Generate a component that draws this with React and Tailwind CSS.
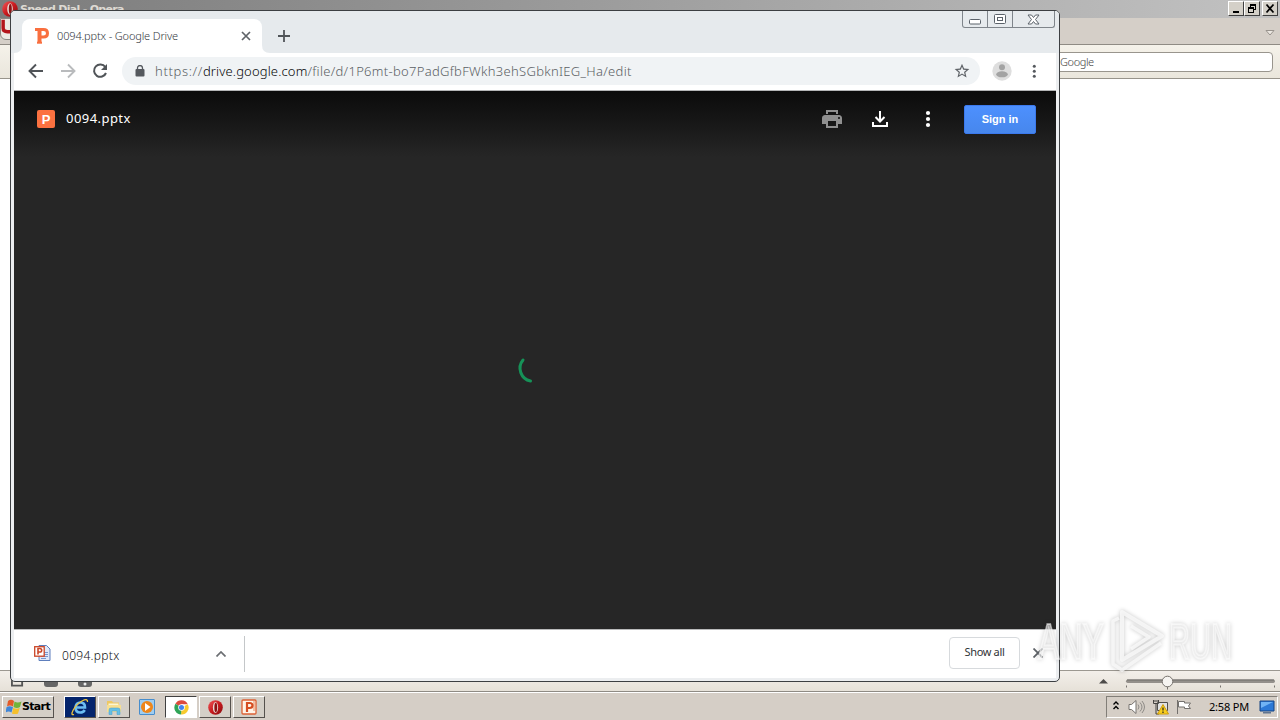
import React from "react";

const UI = "font-['Noto_Sans',sans-serif]";

function OperaLogo({ className }) {
  return (
    <svg viewBox="0 0 16 16" className={className}>
      <defs>
        <linearGradient id="op" x1="0" y1="0" x2="1" y2="1">
          <stop offset="0" stopColor="#f0595b" />
          <stop offset="0.5" stopColor="#c91a1e" />
          <stop offset="1" stopColor="#860b0e" />
        </linearGradient>
      </defs>
      <ellipse cx="8" cy="8" rx="7.8" ry="7.8" fill="url(#op)" />
      <ellipse cx="8" cy="8" rx="2.8" ry="5.8" fill="#e9dcd6" />
      <ellipse cx="8.3" cy="8" rx="1.5" ry="5" fill="#8d1113" />
    </svg>
  );
}

function ClassicButton({ children, className = "" }) {
  return (
    <div className={`flex h-[15px] w-4 items-center justify-center border border-t-white border-l-white border-r-[#404040] border-b-[#404040] bg-[#d4d0c8] ${className}`}>
      <svg viewBox="0 0 12 11" className="h-[11px] w-3" fill="none" stroke="#000" shapeRendering="crispEdges">{children}</svg>
    </div>
  );
}

function OperaWindow() {
  return (
    <div className="flex h-[692px] flex-col bg-white">
      <div className="flex h-[18px] shrink-0 items-start bg-linear-to-r from-[#7c7c7c] to-[#c2c2c2] pr-[2px]">
        <OperaLogo className="mt-px ml-[2px] h-4 w-4" />
        <span className="ml-[2px] font-['DejaVu_Sans',sans-serif] text-[11px] leading-[19px] font-bold tracking-[-0.7px] whitespace-nowrap text-[#dedad3]">Speed Dial - Opera</span>
        <div className="mt-px ml-auto flex">
          <ClassicButton><path d="M3 8.500h6" strokeWidth="2" /></ClassicButton>
          <ClassicButton className="mr-[2px]">
            <path d="M4.500 4V1.500h5v5H8M4 2h6M2.500 4.500h5v5h-5zM2 5h6" strokeWidth="1.200" />
          </ClassicButton>
          <ClassicButton><path d="M2.500 1.500l7 8M9.500 1.500l-7 8" strokeWidth="1.800" shapeRendering="auto" /></ClassicButton>
        </div>
      </div>
      <div className="flex h-[27px] shrink-0 items-center justify-between border-b border-[#8f8b84] bg-[#d5cfc8] pr-[5px]">
        <div className="flex h-[22px] w-[14px] items-start self-start rounded-bl-md border border-[#8b8782] bg-[#ece9e4]">
          <svg viewBox="0 0 14 18" className="h-[17px] w-[14px]" fill="none"><path d="M2.500 0v10q0 4 5 4h4" stroke="#b3141b" strokeWidth="4" /></svg>
        </div>
        <svg viewBox="0 0 10 8" className="mt-1 h-2 w-[10px]"><path d="M1 1.500h8L5 6z" fill="#ece8e2" stroke="#99948e" /></svg>
      </div>
      <div className="flex h-[34px] shrink-0 items-center justify-end border-b border-[#98948b] bg-linear-to-b from-[#f5f2ea] to-[#eae6dc] pr-[7px]">
        <div className={`flex h-5 w-[240px] items-center rounded-[4px] border border-[#99958d] bg-white pt-px pl-[26px] ${UI} text-[11px] font-light tracking-[-0.4px] text-[#444]`}>Google</div>
      </div>
      <div className="flex-1" />
      <div className="flex h-[21px] shrink-0 items-center border-t border-[#9c9891] bg-linear-to-b from-[#f3efea] to-[#e6e1d8] pr-[5px]">
        <div className="-mt-[3px] ml-[11px] flex items-end gap-[20px]">
          <svg viewBox="0 0 14 14" className="h-[14px] w-[13px]" fill="none" stroke="#555" strokeWidth="2"><path d="M1 1h11v12H1z" /></svg>
          <svg viewBox="0 0 14 14" className="h-[14px] w-[14px]"><rect y="3" width="14" height="11" rx="3" fill="#666" /></svg>
          <svg viewBox="0 0 14 14" className="h-[14px] w-[14px]"><rect width="14" height="14" rx="3" fill="#666" /><circle cx="7" cy="11" r="1.500" fill="#eee" /></svg>
        </div>
        <svg viewBox="0 0 180 18" className="ml-auto h-[18px] w-[180px]">
          <path d="M4 11.500L8.500 7l4.500 4.500z" fill="#4d4b49" />
          <rect x="31" y="7.500" width="149" height="3.500" rx="1.700" fill="#94908b" />
          <path d="M32 8h147" stroke="#716e6b" />
          <path d="M31.500 13.500v2M72.500 13.500v4M125.500 13.500v2M179.500 13.500v2" stroke="#77736e" />
          <circle cx="72.500" cy="9.500" r="5.300" fill="#f6f4f1" stroke="#77736e" />
        </svg>
      </div>
      <div className="h-px shrink-0 bg-[#8f8b84]" />
    </div>
  );
}

function TabStrip() {
  return (
    <div className="flex h-[42px] shrink-0 items-start bg-[#e6eaed]">
      <div className="mt-2 flex h-[34px]">
        <svg viewBox="0 0 8 34" className="h-[34px] w-2"><path d="M8 26v8H0q8 0 8-8" fill="#fff" /></svg>
        <div className="flex w-[240px] items-center rounded-t-lg bg-white pr-[11px] pl-[13px]">
          <svg viewBox="0 0 14 16" className="h-4 w-[14px]" fill="none" stroke="#f96f3f" strokeWidth="3"><path d="M0 1.500h8.500q4 0 4 3.700t-4 3.800H5" /><path d="M4.500 1v14" strokeWidth="4" /><path d="M2 14.700h5" strokeWidth="2" /></svg>
          <span className={`ml-[8px] ${UI} text-[11px] font-light tracking-[-0.15px] whitespace-nowrap text-[#33373c]`}>0094.pptx - Google Drive</span>
          <svg viewBox="0 0 10 10" className="ml-auto h-[10px] w-[10px]" stroke="#5f6368" strokeWidth="1.700"><path d="M1 1l8 8M9 1l-8 8" /></svg>
        </div>
        <svg viewBox="0 0 8 34" className="h-[34px] w-2"><path d="M0 26v8h8q-8 0-8-8" fill="#fff" /></svg>
      </div>
      <svg viewBox="0 0 12 12" className="mt-[19px] ml-[8px] h-3 w-3" stroke="#505458" strokeWidth="1.800"><path d="M6 0v12M0 6h12" /></svg>
      <div className="mr-px ml-auto flex h-[17px] w-[93px] rounded-b-[3px] border border-t-0 border-[#7f858b] text-[#5b626a]">
        <div className="flex w-[25px] items-center justify-center border-r border-[#7f858b]">
          <svg viewBox="0 0 12 6" className="mt-[5px] h-[6px] w-3"><rect x="0.500" y="0.500" width="11" height="4.500" rx="1" fill="#fff" stroke="currentColor" /></svg>
        </div>
        <div className="flex w-[25px] items-center justify-center border-r border-[#7f858b]">
          <svg viewBox="0 0 12 10" className="h-[10px] w-3" fill="#fff" stroke="currentColor"><rect x="0.500" y="0.500" width="11" height="9" rx="1" /><rect x="3.500" y="3.500" width="5" height="3" /></svg>
        </div>
        <div className="flex flex-1 items-center justify-center">
          <svg viewBox="0 0 13 11" className="h-[11px] w-[13px]" fill="#fff" stroke="currentColor"><path d="M1 1h3.500l2 2.500 2-2.500H12L8.500 5.500 12 10H8.500l-2-2.500-2 2.500H1l3.500-4.500z" /></svg>
        </div>
      </div>
    </div>
  );
}

function Toolbar() {
  return (
    <div className="flex h-[38px] shrink-0 items-center border-b border-[#b4b5b6] bg-white pl-[14px]">
      <svg viewBox="0 0 16 16" className="-mt-[2px] h-4 w-4" fill="none" stroke="#505458" strokeWidth="1.900"><path d="M15 8H2M8 1.500L1.500 8 8 14.500" /></svg>
      <svg viewBox="0 0 16 16" className="-mt-[2px] ml-4 h-4 w-4" fill="none" stroke="#b9bbbd" strokeWidth="1.900"><path d="M1 8h13M8 1.500L14.500 8 8 14.500" /></svg>
      <svg viewBox="0 0 16 16" className="-mt-[2px] ml-4 h-4 w-4" fill="none" stroke="#505458" strokeWidth="2"><path d="M13.300 4A6.200 6.200 0 1 0 14 10" /><path d="M15 1v6H9z" fill="#505458" stroke="none" /></svg>
      <div className="-mt-[2px] ml-[14px] flex h-7 w-[858px] items-center rounded-full bg-[#f0f3f5] pr-[10px] pl-[13px]">
        <svg viewBox="0 0 10 12" className="h-3 w-[10px]"><rect x="0.500" y="4" width="9" height="7.500" rx="1" fill="#55595e" /><path d="M2.500 4.500V3a2.500 2.500 0 0 1 5 0v1.500" fill="none" stroke="#55595e" strokeWidth="1.300" /></svg>
        <div className={`ml-[10px] ${UI} text-[13px] leading-5 font-light whitespace-nowrap text-[#5b5f64]`}>
          <span className="tracking-[0.65px]">https://</span><span className="tracking-[0.15px] text-[#050607]">drive.google.com</span><span className="tracking-[0.3px]">/file/d/1P6mt-bo7PadGfbFWkh3ehSGbknIEG_Ha/edit</span>
        </div>
        <svg viewBox="0 0 24 24" className="ml-auto h-4 w-4 scale-110" fill="#5f6368"><path d="M22 9.240l-7.190-.620L12 2 9.190 8.630 2 9.240l5.460 4.730L5.820 21 12 17.270 18.180 21l-1.630-7.030L22 9.240zM12 15.400l-3.760 2.270 1-4.280-3.320-2.880 4.380-.380L12 6.100l1.710 4.040 4.380.380-3.320 2.880 1 4.280L12 15.400z" /></svg>
      </div>
      <svg viewBox="0 0 20 20" className="-mt-[2px] ml-[12px] h-5 w-5"><circle cx="10" cy="10" r="9.700" fill="#dedede" /><circle cx="10" cy="6.300" r="3" fill="#a3a3a3" /><ellipse cx="10" cy="13.300" rx="5.800" ry="3" fill="#a3a3a3" /></svg>
      <svg viewBox="0 0 4 14" className="-mt-px ml-[20px] h-[14px] w-1" fill="#55595e"><circle cx="2.300" cy="2.200" r="1.500" /><circle cx="2.300" cy="7.200" r="1.500" /><circle cx="2.300" cy="12.200" r="1.500" /></svg>
    </div>
  );
}

function Viewer() {
  return (
    <div className="flex min-h-0 flex-1 flex-col bg-[#262626]">
      <div className="flex h-[66px] shrink-0 items-start bg-linear-to-b from-[#0b0b0b] to-[#262626] pr-5 pl-[23px]">
        <div className="mt-[19px] flex h-[18px] w-[18px] items-center justify-center rounded-[2px] bg-[#fb7140] font-['Liberation_Sans',sans-serif] text-[13px] leading-none font-bold text-white">P</div>
        <span className={`mt-[17px] ml-[11px] ${UI} text-[13px] leading-5 tracking-[0.45px] text-white`}>0094.pptx</span>
        <svg viewBox="0 0 24 24" className="mt-4 ml-auto h-6 w-6" fill="#909090"><path d="M19 8H5c-1.660 0-3 1.340-3 3v6h4v4h12v-4h4v-6c0-1.660-1.340-3-3-3zm-3 11H8v-5h8v5zm3-7c-.550 0-1-.450-1-1s.450-1 1-1 1 .450 1 1-.450 1-1 1zm-1-9H6v4h12V3z" /><path d="M8 5h8v3H8z" fill="#151515" /></svg>
        <svg viewBox="0 0 24 24" className="mt-4 ml-6 h-6 w-6" fill="none" stroke="#fff" strokeWidth="2"><path d="M5 15v4h14v-4M12 4v10M7.500 10l4.500 4.500 4.500-4.500" /></svg>
        <svg viewBox="0 0 24 24" className="mt-4 ml-6 h-6 w-6" fill="#fff"><circle cx="12" cy="6" r="2.100" /><circle cx="12" cy="12" r="2.100" /><circle cx="12" cy="18" r="2.100" /></svg>
        <div className="mt-[14px] ml-6 flex h-[29px] w-[72px] items-center justify-center rounded-[2px] border border-[#3b79ed] bg-linear-to-b from-[#4d90fe] to-[#4787ed] font-['Liberation_Sans',sans-serif] text-[11px] font-bold text-white">Sign in</div>
      </div>
      <div className="flex flex-1 justify-center pr-[14px]">
        <svg viewBox="0 0 30 30" className="mt-[199px] h-[30px] w-[30px]" fill="none"><path d="M9 4A13 13 0 0 0 16.500 25" transform="translate(1 0)" stroke="#169258" strokeWidth="3" strokeLinecap="round" /></svg>
      </div>
    </div>
  );
}

function DownloadShelf() {
  return (
    <div className="flex h-[49px] shrink-0 items-center border-t border-[#b9babb] bg-white pl-5">
      <svg viewBox="0 0 17 17" className="-mt-[2px] h-[17px] w-[17px]">
        <path d="M5 .500h7.500l3.500 3.500v11.500H5z" fill="#dfe8f8" stroke="#5e7fbd" />
        <path d="M7 7.500h7M7 9.500h7M7 11.500h7M7 13.500h5" stroke="#7896cf" />
        <rect x=".700" y="1.700" width="9.500" height="9.500" fill="#fff" stroke="#ca4627" strokeWidth="1.300" />
        <path d="M4 9.500v-6h1.800q1.900 0 1.900 1.800T5.800 7H4" fill="none" stroke="#ca4627" strokeWidth="1.600" />
      </svg>
      <span className={`mt-[3px] ml-[11px] ${UI} text-[12px] font-light tracking-[0.3px] text-[#101214]`}>0094.pptx</span>
      <svg viewBox="0 0 10 6" className="ml-auto h-[6px] w-[10px]" fill="none" stroke="#6b6e72" strokeWidth="1.700"><path d="M.500 5.500L5 1l4.500 4.500" /></svg>
      <div className="ml-[18px] h-[36px] w-px bg-[#c4c7c9]" />
      <div className={`-mt-[3px] ml-[704px] flex h-8 w-[71px] shrink-0 items-center justify-center rounded-[4px] border border-[#d7dadd] ${UI} text-[11px] tracking-[-0.35px] whitespace-nowrap text-[#303336]`}>Show all</div>
      <svg viewBox="0 0 10 10" className="-mt-[3px] mr-[13px] ml-[13px] h-[10px] w-[10px] shrink-0" stroke="#5f6368" strokeWidth="1.800"><path d="M.500 .500l9 9M9.500 .500l-9 9" /></svg>
    </div>
  );
}

function TaskButton({ children, className = "bg-[#d4cfc7] border-t-white border-l-white border-r-[#55514d] border-b-[#55514d]", width = "w-8" }) {
  return <div className={`flex h-[22px] shrink-0 items-center justify-center border ${width} ${className}`}>{children}</div>;
}

function Taskbar() {
  return (
    <div className="flex h-7 items-center border-t border-white bg-[#d5cec6] pt-px pr-[2px] pl-[2px]">
      <TaskButton width="w-[52px]">
        <svg viewBox="1 1 16 15" className="-mt-[2px] h-[15px] w-[16px] shrink-0">
          <path d="M3 3q3-2.500 6 0L8 8.500q-3-2-6 0z" fill="#e35a28" />
          <path d="M9.500 3.500q3 2 7 0L15 9q-3 2-6.500 0z" fill="#72b43a" />
          <path d="M1.500 9.200q3-2 6.500 0L6.500 14.500q-3-2-6 0z" fill="#3f86d8" />
          <path d="M8.300 9.700q3 2 6.500 0L13 15.500q-3 2-6 0z" fill="#f5c02c" />
        </svg>
        <span className="font-['DejaVu_Sans',sans-serif] text-[11px] font-bold tracking-[-0.65px] text-black">Start</span>
      </TaskButton>
      <TaskButton className="ml-[10px] border-t-white border-l-white border-r-[#55514d] border-b-[#55514d] bg-[#04246c]">
        <svg viewBox="0 0 20 20" className="h-5 w-5 shrink-0" fill="none">
          <path d="M5.500 10.500h9.500q0-5-4.500-5t-5 5q0 5 4.800 5 3 0 4.400-2.500" stroke="#6cbdf2" strokeWidth="2.600" />
          <path d="M4 17.500q-3.500 1-1-4Q6 7.500 12 4q6-3 5.500 1" stroke="#edc23e" strokeWidth="1.300" />
        </svg>
      </TaskButton>
      <TaskButton className="ml-[2px] border-t-white border-l-white border-r-[#55514d] border-b-[#55514d] bg-[#d4cfc7]">
        <svg viewBox="0 0 18 18" className="h-[18px] w-[18px]">
          <path d="M2 3h5l1 1.500h6V14H2z" fill="#eec862" />
          <path d="M3.500 5.500h10V13h-10z" fill="#faf6d5" />
          <path d="M2 7h14v7H2z" fill="#f7df91" />
          <path d="M4 16.500V12q0-2 2-2h7q2 0 2 2v4.500h-3V13H7v3.500z" fill="#65bfe4" stroke="#429dcc" strokeWidth=".500" />
        </svg>
      </TaskButton>
      <div className="ml-[9px] flex h-4 w-4 items-center justify-center rounded-[1px] border border-[#478dcc] bg-[#9fcdf0]">
        <svg viewBox="0 0 14 14" className="h-[14px] w-[14px]"><circle cx="7" cy="7" r="6" fill="#ee861a" /><path d="M5 3l5.500 4L5 11z" fill="#fff" /></svg>
      </div>
      <TaskButton className="ml-[10px] border-t-[#404040] border-l-[#404040] border-r-white border-b-white bg-white">
        <svg viewBox="0 0 16 16" className="h-[15px] w-[15px]">
          <path d="M8 8L1.500 4A7.500 7.500 0 0 1 14.700 4.500H8z" fill="#dd4b3e" />
          <path d="M8 8l6.700-3.500A7.500 7.500 0 0 1 7.500 15.500z" fill="#f8ca2d" />
          <path d="M8 8l-.500 7.500A7.500 7.500 0 0 1 1.500 4z" fill="#2fa457" />
          <circle cx="8" cy="8" r="3.500" fill="#fff" /><circle cx="8" cy="8" r="2.700" fill="#4384ef" />
        </svg>
      </TaskButton>
      <TaskButton className="ml-[2px] border-t-white border-l-white border-r-[#55514d] border-b-[#55514d] bg-[#d4cfc7]"><OperaLogo className="h-[15px] w-[15px]" /></TaskButton>
      <TaskButton className="ml-[2px] border-t-white border-l-white border-r-[#55514d] border-b-[#55514d] bg-[#d4cfc7]">
        <svg viewBox="0 0 16 16" className="h-4 w-4" fill="none"><rect x="1" y="1" width="14" height="14" rx="1" fill="#fff4e9" stroke="#dc6034" strokeWidth="1.300" /><path d="M12 3h2M12 5h2M12 7h2M12 9h2M12 11h2" stroke="#e58a61" /><path d="M6 13V4h2.500q3 0 3 2.500T8.500 9H6" stroke="#d54d21" strokeWidth="2.200" /></svg>
      </TaskButton>
      <div className="ml-auto flex h-[22px] w-[172px] items-center border border-t-[#827e78] border-l-[#827e78] border-r-white border-b-white pr-[2px] pl-[6px]">
        <svg viewBox="0 0 6 9" className="mb-[3px] h-[9px] w-[6px]" fill="none" stroke="#000" strokeWidth="1.400"><path d="M.500 3.500L3 1l2.500 2.500M.500 8L3 5.500 5.500 8" /></svg>
        <svg viewBox="0 0 17 16" className="ml-[9px] h-4 w-[17px]" fill="#fff" stroke="#77736f"><path d="M1 5.500h2.500L8 1.500v13l-4.500-4H1z" /><path d="M10 5.500q2 2.500 0 5M12 3.500q4 4.500 0 9M14 2q5 6 0 12" fill="none" stroke="#8e8b87" /></svg>
        <svg viewBox="0 0 17 16" className="ml-[7px] h-4 w-[17px]"><path d="M5.500 3.500h10v8h-10z" fill="#e2e2e2" stroke="#504e4c" /><path d="M1.500 1v3.500h5V1M4 5v10h3M3 1v2M5 1v2" fill="none" stroke="#454341" /><path d="M11 5.500L16.500 15h-11z" fill="#f8ce1c" stroke="#cf9d0c" /><path d="M11 8.500v3M11 12.500v1.500" stroke="#222" strokeWidth="1.200" /></svg>
        <svg viewBox="0 0 16 16" className="ml-[7px] h-4 w-4" fill="#fff" stroke="#73706d"><path d="M1.500 1v14" /><path d="M2.500 2.500h6v1.500h6l-2 3 2 2.500h-6V8h-6z" /></svg>
        <span className={`ml-[17px] ${UI} text-[11px] tracking-[-0.2px] whitespace-nowrap text-black`}>2:58 PM</span>
        <svg viewBox="0 0 16 14" className="ml-auto h-[14px] w-4"><path d="M1 1h14v10H1z" fill="#2d79d6" stroke="#174483" /><path d="M2 2h12L2 8z" fill="#71b3f4" /><path d="M4 12h8v1.500H4z" fill="#617590" /></svg>
      </div>
    </div>
  );
}

function Watermark() {
  return (
    <svg viewBox="0 0 204 72" className="absolute top-[604px] left-[1036px] h-[72px] w-[204px] overflow-visible">
      <g className="drop-shadow-[0_0_2px_rgba(0,0,0,0.28)]">
        <g fontFamily="'Liberation Sans', sans-serif" fontSize="50" fill="#f8f8f8" fillOpacity="0.6" stroke="#ffffff" strokeOpacity="0.5" strokeWidth="2">
          <text x="2" y="55" textLength="66" lengthAdjust="spacingAndGlyphs">ANY</text>
          <text x="133" y="55" textLength="63" lengthAdjust="spacingAndGlyphs">RUN</text>
        </g>
        <g fill="none" stroke="#fafafa" strokeOpacity="0.8" strokeWidth="4" strokeLinejoin="round">
          <path d="M86 8l40 24-40 24z" />
          <path d="M95 22l18 11-18 12M83 14l-6 3v43l9 6 39-27" strokeWidth="3.500" />
        </g>
      </g>
    </svg>
  );
}

export default function App() {
  return (
    <div className="relative flex h-[720px] w-[1280px] flex-col overflow-hidden bg-white">
      <OperaWindow />
      <Taskbar />
      <div className="absolute top-[10px] left-[10px] flex h-[672px] w-[1050px] flex-col rounded-[5px] border border-[#3c3f42] bg-[#eceef0] px-[3px] pb-[3px]">
        <div className="-mx-[3px] rounded-t-[4px] bg-[#e6eaed] px-[3px]"><TabStrip /></div>
        <Toolbar />
        <Viewer />
        <DownloadShelf />
      </div>
      <Watermark />
    </div>
  );
}
